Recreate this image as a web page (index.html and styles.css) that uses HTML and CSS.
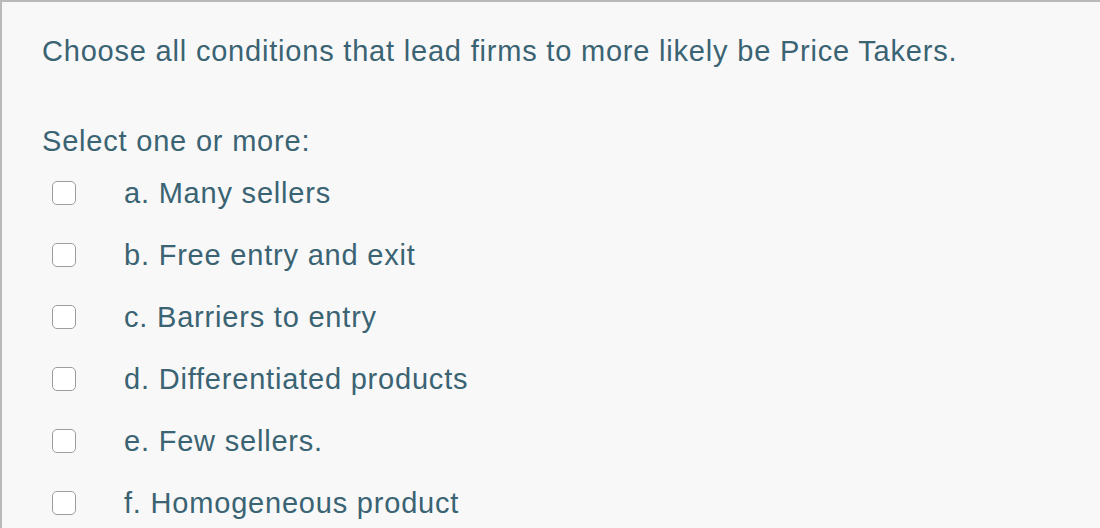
FILE: index.html
```html
<!DOCTYPE html>
<html lang="en">
<head>
    <meta charset="UTF-8">
    <title>Question</title>
    <link rel="stylesheet" href="styles.css">
</head>
<body>
    <div class="question">
        <p class="qtext">Choose all conditions that lead firms to more likely be Price Takers.</p>
        <p class="prompt">Select one or more:</p>
        <div class="answers">
            <label class="option"><input type="checkbox"><span>a. Many sellers</span></label>
            <label class="option"><input type="checkbox"><span>b. Free entry and exit</span></label>
            <label class="option"><input type="checkbox"><span>c. Barriers to entry</span></label>
            <label class="option"><input type="checkbox"><span>d. Differentiated products</span></label>
            <label class="option"><input type="checkbox"><span>e. Few sellers.</span></label>
            <label class="option"><input type="checkbox"><span>f. Homogeneous product</span></label>
        </div>
    </div>
</body>
</html>
```

FILE: styles.css
```css
*{
    padding: 0;
    margin: 0;
    box-sizing: border-box;
}

body{
    background: #f8f8f8;
    font-family: "Liberation Sans", Arial, sans-serif;
    font-size: 29px;
    letter-spacing: 0.8px;
    color: #3a6373;
    height: 528px;
    overflow: hidden;
}

.question{
    border-top: 2px solid #b9b9b9;
    border-left: 2px solid #b9b9b9;
    min-height: 528px;
    padding: 31px 0 0 40px;
}

.qtext{
    line-height: 36px;
}

.prompt{
    line-height: 36px;
    margin-top: 54px;
}

.answers{
    display: flex;
    flex-direction: column;
    margin-top: 3px;
}

.option{
    display: flex;
    align-items: center;
    height: 62px;
}

.option input{
    appearance: none;
    width: 24px;
    height: 24px;
    border: 1px solid #9d9d9d;
    border-radius: 5px;
    background: #fff;
    margin: 0 48px 0 10px;
}
```
